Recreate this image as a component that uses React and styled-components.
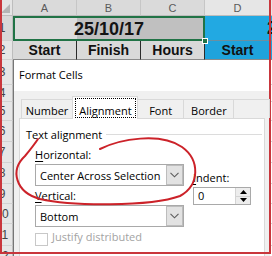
import React from "react";
import styled, { createGlobalStyle } from "styled-components";

const GlobalStyle = createGlobalStyle`
  html, body { margin: 0; padding: 0; background: #ffffff; }
  body { width: 272px; height: 256px; overflow: hidden; }
  * { box-sizing: border-box; }
`;

const Page = styled.div`
  position: relative;
  width: 272px;
  height: 256px;
  overflow: hidden;
  background: #ffffff;
`;

/* ---------- spreadsheet ---------- */
const Sheet = styled.div`
  display: grid;
  grid-template-columns: 21px 64px 64px 64px 66px 64px 64px;
  grid-template-rows: 16px 25px 19px 25px 17px 19px 21px 21px 21px 20px 20px 22px 20px;
  width: max-content;
  margin-left: -8px;
  font-family: "Liberation Sans", Arial, sans-serif;
`;

const Corner = styled.div`
  position: relative;
  background: #e4e4e4;
  border-right: 1px solid #bdbdbd;
  border-bottom: 1px solid #bdbdbd;
  &::after {
    content: "";
    position: absolute;
    right: 2px;
    bottom: 2px;
    border-left: 9px solid transparent;
    border-bottom: 9px solid #b5b5b5;
  }
`;

const ColHead = styled.div`
  display: flex;
  align-items: center;
  justify-content: center;
  background: ${(p) => (p.$sel ? "#dadada" : "#e6e6e6")};
  border-right: 1px solid #c6c6c6;
  border-bottom: 1px solid #bdbdbd;
  color: #5a5a5a;
  font-size: 11px;
`;

const RowHead = styled.div`
  display: flex;
  align-items: center;
  justify-content: center;
  background: ${(p) => (p.$sel ? "#d8d8d8" : "#e6e6e6")};
  border-right: 1px solid #bdbdbd;
  border-bottom: 1px solid #d2d2d2;
  color: #444;
  font-size: 12px;
`;

const TitleCell = styled.div`
  grid-column: span 3;
  position: relative;
  display: flex;
  align-items: flex-end;
  justify-content: center;
  padding-bottom: 1px;
  background: linear-gradient(to right, #dcdcdc 0 64px, #c0c0c0 64px);
  box-shadow: inset 0 0 0 2px #217346;
  font-size: 18px;
  font-weight: bold;
  line-height: 22px;
  color: #141414;
`;

const FillHandle = styled.span`
  position: absolute;
  right: -3px;
  bottom: -3px;
  width: 6px;
  height: 6px;
  background: #217346;
  border: 1px solid #ffffff;
  z-index: 2;
`;

const BlueTitle = styled.div`
  grid-column: span 3;
  display: flex;
  align-items: flex-end;
  justify-content: center;
  padding-bottom: 1px;
  background: #22a9e2;
  border-bottom: 1px solid #6b8fa0;
  font-size: 18px;
  font-weight: bold;
  line-height: 22px;
  color: #141414;
`;

const HeadCell = styled.div`
  display: flex;
  align-items: center;
  justify-content: center;
  background: ${(p) => (p.$blue ? "#1fa3dc" : "#d9d9d9")};
  border-right: 1px solid #2b2b2b;
  border-bottom: 1px solid #8a8a8a;
  font-size: 14px;
  font-weight: bold;
  color: #111;
`;

const Blank = styled.div`
  grid-column: span 6;
  background: #ffffff;
  border-bottom: 1px solid #d4d4d4;
`;

/* ---------- dialog ---------- */
const Dialog = styled.div`
  position: absolute;
  left: 13px;
  top: 60px;
  width: 257px;
  height: 200px;
  display: flex;
  flex-direction: column;
  background: #f0f0f0;
  border-left: 1px solid #767676;
  font-family: "Open Sans", "Noto Sans", sans-serif;
  font-size: 11px;
  line-height: 15px;
  color: #000;
`;

const TitleBar = styled.div`
  height: 31px;
  flex: none;
  background: #ffffff;
  padding: 7px 0 0 5px;
`;

const TabsRow = styled.div`
  height: 27px;
  flex: none;
  display: flex;
  align-items: flex-end;
  padding-left: 7px;
`;

const Tab = styled.div`
  position: relative;
  z-index: ${(p) => (p.$active ? 2 : 1)};
  width: ${(p) => p.$w}px;
  height: ${(p) => (p.$active ? 23 : 19)}px;
  margin-left: ${(p) => (p.$first ? 0 : -1)}px;
  margin-bottom: ${(p) => (p.$active ? -1 : 0)}px;
  padding: ${(p) => (p.$active ? "1px 1px 1px 2px" : "3px 0 0 0")};
  background: ${(p) => (p.$active ? "#ffffff" : "#f0f0f0")};
  border: 1px solid #d9d9d9;
  border-bottom: none;
  text-align: center;
  white-space: nowrap;
`;

const FocusBox = styled.div`
  height: 100%;
  padding-top: 4px;
  border: 1px dotted #000;
`;

const TabPage = styled.div`
  flex: 1;
  margin: 0 5px 0 5px;
  background: #ffffff;
  border: 1px solid #d9d9d9;
  padding: 8px 2px 0 6px;
`;

const GroupHeader = styled.div`
  display: flex;
  align-items: center;
`;

const Rule = styled.div`
  flex: 1;
  height: 1px;
  margin-left: 4px;
  background: #dcdcdc;
`;

const Fields = styled.div`
  display: flex;
  gap: 9px;
  margin: 5px 0 0 9px;
`;

const LeftCol = styled.div`
  width: 149px;
  display: flex;
  flex-direction: column;
`;

const RightCol = styled.div`
  padding-top: 23px;
  display: flex;
  flex-direction: column;
`;

const Label = styled.div`
  margin-top: ${(p) => p.$mt || 0}px;
  & u {
    text-decoration: underline;
    text-underline-offset: 2px;
  }
`;

const Combo = styled.div`
  margin-top: 2px;
  height: 22px;
  display: flex;
  align-items: stretch;
  background: #ffffff;
  border: 1px solid #a9a9a9;
`;

const ComboText = styled.div`
  flex: 1;
  padding-left: 4px;
  display: flex;
  align-items: center;
  white-space: nowrap;
  overflow: hidden;
`;

const DropButton = styled.div`
  width: 17px;
  display: flex;
  align-items: center;
  justify-content: center;
  background: #e2e2e2;
  border: 1px solid #bdbdbd;
`;

const Spin = styled.div`
  margin-top: 2px;
  width: 58px;
  height: 18px;
  display: flex;
  border: 1px solid #a9a9a9;
  background: #ffffff;
`;

const SpinValue = styled.div`
  flex: 1;
  padding-left: 4px;
  line-height: 16px;
`;

const SpinButtons = styled.div`
  width: 15px;
  display: flex;
  flex-direction: column;
  border-left: 1px solid #d4d4d4;
`;

const SpinArrow = styled.div`
  flex: 1;
  display: flex;
  align-items: center;
  justify-content: center;
  background: #ededed;
  border-bottom: ${(p) => (p.$up ? "1px solid #d4d4d4" : "none")};
`;

const CheckRow = styled.div`
  margin-top: 2px;
  display: flex;
  align-items: flex-start;
  color: #a3a3a3;
  white-space: nowrap;
`;

const CheckBox = styled.div`
  width: 13px;
  height: 13px;
  margin: 4px 4px 0 0;
  border: 1px solid #c8c8c8;
  background: #ffffff;
`;

/* ---------- overlays ---------- */
const Frame = styled.div`
  position: absolute;
  left: 0;
  top: -10px;
  width: 271px;
  height: 264px;
  border: 2px solid #c9363c;
  pointer-events: none;
`;

const Ink = styled.svg`
  position: absolute;
  left: 0;
  top: 0;
  pointer-events: none;
`;

const Chevron = () => (
  <svg width="9" height="6" viewBox="0 0 9 6">
    <path d="M0.5 0.8 L4.5 4.8 L8.5 0.8" fill="none" stroke="#5c5c5c" strokeWidth="1.1" />
  </svg>
);

const Tri = ({ up }) => (
  <svg width="7" height="4" viewBox="0 0 7 4">
    <path d={up ? "M0 4 L3.5 0 L7 4 Z" : "M0 0 L3.5 4 L7 0 Z"} fill="#000" />
  </svg>
);

const rows = [3, 4, 5, 6, 7, 8, 9, 10, 11, 12];

export default function App() {
  return (
    <>
      <GlobalStyle />
      <Page>
        <Sheet>
          <Corner />
          <ColHead $sel>A</ColHead>
          <ColHead $sel>B</ColHead>
          <ColHead $sel>C</ColHead>
          <ColHead>D</ColHead>
          <ColHead />
          <ColHead />

          <RowHead $sel>1</RowHead>
          <TitleCell>
            25/10/17
            <FillHandle />
          </TitleCell>
          <BlueTitle>25/10/17</BlueTitle>

          <RowHead>2</RowHead>
          <HeadCell>Start</HeadCell>
          <HeadCell>Finish</HeadCell>
          <HeadCell>Hours</HeadCell>
          <HeadCell $blue>Start</HeadCell>
          <HeadCell $blue />
          <HeadCell $blue />

          {rows.map((n) => (
            <React.Fragment key={n}>
              <RowHead>{n}</RowHead>
              <Blank />
            </React.Fragment>
          ))}
        </Sheet>

        <Dialog>
          <TitleBar>Format Cells</TitleBar>
          <TabsRow>
            <Tab $first $w={57}>Number</Tab>
            <Tab $active $w={72}>
              <FocusBox>Alignment</FocusBox>
            </Tab>
            <Tab $w={52}>Font</Tab>
            <Tab $w={56}>Border</Tab>
            <Tab $w={40}></Tab>
          </TabsRow>
          <TabPage>
            <GroupHeader>
              Text alignment
              <Rule />
            </GroupHeader>
            <Fields>
              <LeftCol>
                <Label>
                  <u>H</u>orizontal:
                </Label>
                <Combo>
                  <ComboText>Center Across Selection</ComboText>
                  <DropButton>
                    <Chevron />
                  </DropButton>
                </Combo>
                <Label $mt={2}>
                  <u>V</u>ertical:
                </Label>
                <Combo>
                  <ComboText>Bottom</ComboText>
                  <DropButton>
                    <Chevron />
                  </DropButton>
                </Combo>
                <CheckRow>
                  <CheckBox />
                  Justify distributed
                </CheckRow>
              </LeftCol>
              <RightCol>
                <Label>
                  <u>I</u>ndent:
                </Label>
                <Spin>
                  <SpinValue>0</SpinValue>
                  <SpinButtons>
                    <SpinArrow $up>
                      <Tri up />
                    </SpinArrow>
                    <SpinArrow>
                      <Tri />
                    </SpinArrow>
                  </SpinButtons>
                </Spin>
              </RightCol>
            </Fields>
          </TabPage>
        </Dialog>

        <Ink width="272" height="256" viewBox="0 0 272 256">
          <path
            d="M100 149 C120 139 160 132 182 147 C200 160 200 185 180 196 C150 207 70 206 40 199 C15 192 10 170 25 156 C30 150 34 145 38 139"
            fill="none"
            stroke="#cc2229"
            strokeWidth="2"
            strokeLinecap="round"
          />
        </Ink>
        <Frame />
      </Page>
    </>
  );
}
